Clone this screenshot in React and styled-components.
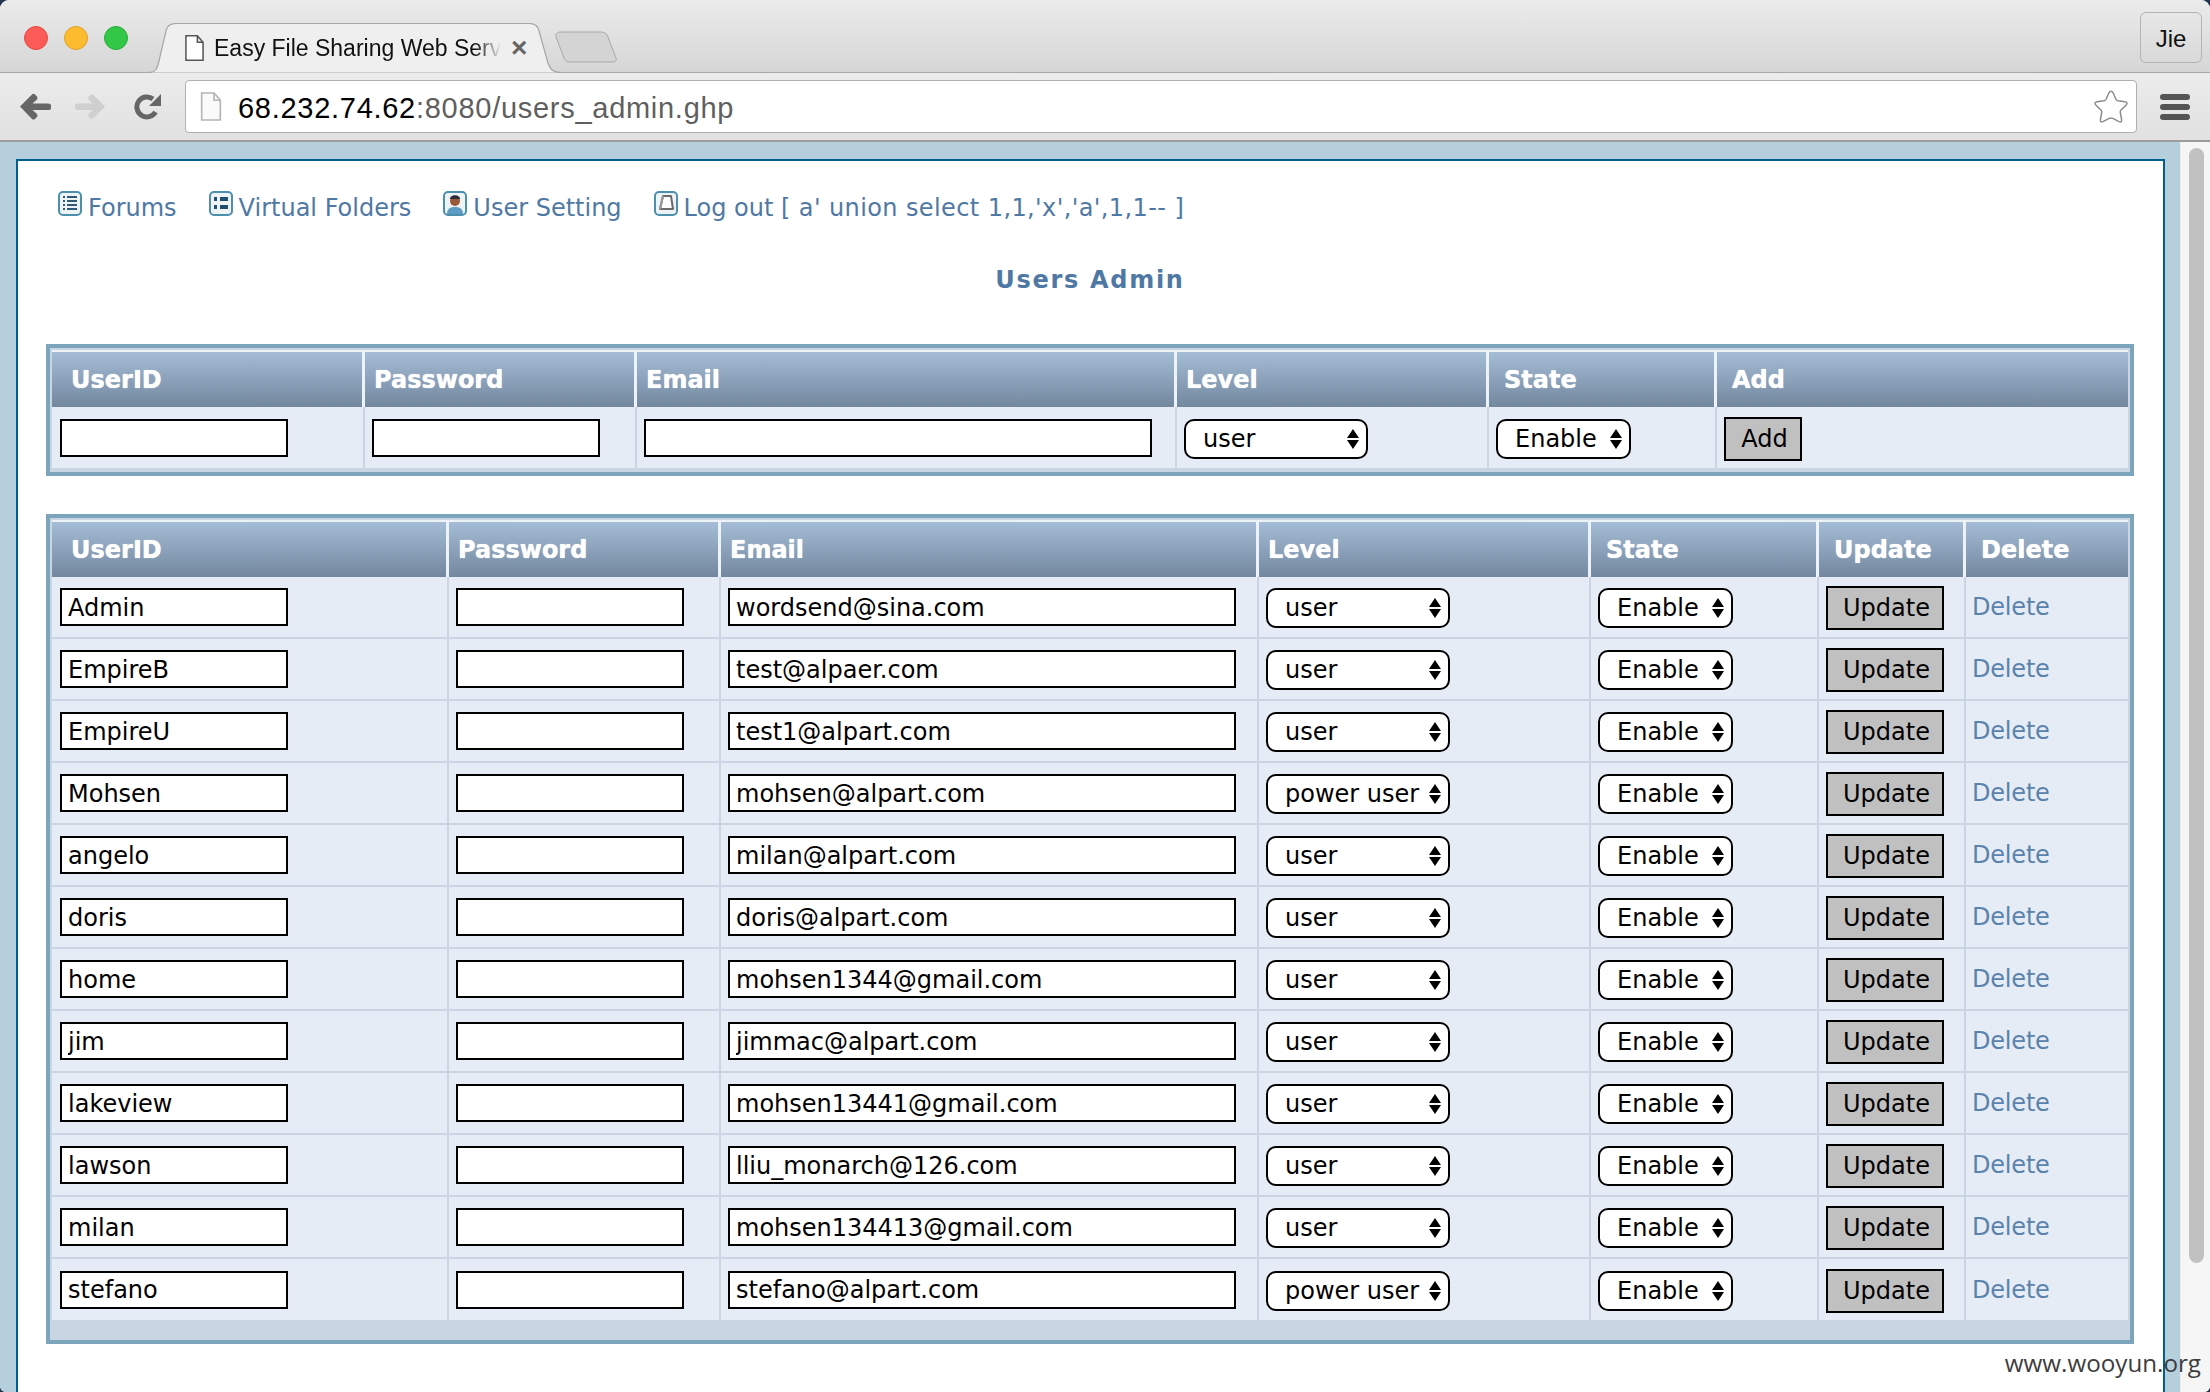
import React from 'react';
import styled, { createGlobalStyle } from 'styled-components';

const GlobalStyle = createGlobalStyle`
  * { box-sizing: border-box; }
  html, body { margin: 0; padding: 0; background: #24344f; }
  #root { width: 2210px; height: 1392px; }
`;

// --- BROWSER CHROME ---

const Win = styled.div`
  position: relative;
  display: flex;
  flex-direction: column;
  width: 2210px;
  height: 1392px;
  overflow: hidden;
  border-radius: 9px 9px 6px 6px;
  background: #fff;
`;

const TabStrip = styled.div`
  display: flex;
  align-items: flex-end;
  height: 73px;
  flex: none;
  border-bottom: 1px solid #a8a8a8;
  background: linear-gradient(#ebebeb, #d6d6d6);
`;

const Dots = styled.div`
  display: flex;
  gap: 16px;
  width: 148px;
  padding: 0 0 22px 24px;
  align-self: flex-end;
`;

const Dot = styled.span`
  width: 24px;
  height: 24px;
  border-radius: 50%;
  background: ${p => p.$fill};
  border: 1px solid ${p => p.$edge};
`;

const Tab = styled.div`
  position: relative;
  display: flex;
  align-items: center;
  width: 413px;
  height: 50px;
  margin-bottom: -1px;
  padding-left: 37px;
`;

const TabShape = styled.svg`
  position: absolute;
  left: 0;
  top: 0;
`;

const TabFile = styled.span`
  position: relative;
  display: flex;
  flex: none;
`;

const TabTitle = styled.span`
  position: relative;
  width: 290px;
  margin-left: 10px;
  white-space: nowrap;
  font: 23px 'Liberation Sans', sans-serif;
  color: #111;
  -webkit-mask-image: linear-gradient(to right, #000 90%, transparent 99%);
  mask-image: linear-gradient(to right, #000 90%, transparent 99%);
`;

const TabClose = styled.span`
  position: relative;
  margin-left: 7px;
  font: bold 28px 'Liberation Sans', sans-serif;
  color: #666;
`;

const NewTab = styled.svg`
  margin: 0 0 9px -6px;
  flex: none;
`;

const Profile = styled.div`
  display: flex;
  align-items: center;
  justify-content: center;
  width: 62px;
  height: 51px;
  margin: 0 8px 9px auto;
  padding-top: 2px;
  border: 1px solid #b4b4b4;
  border-radius: 6px;
  font: 24px 'Liberation Sans', sans-serif;
  color: #111;
`;

const Toolbar = styled.div`
  display: flex;
  align-items: center;
  height: 69px;
  flex: none;
  border-bottom: 2px solid #9c9c9c;
  background: linear-gradient(#ececec, #e1e1e1);
`;

const NavIcon = styled.svg`
  flex: none;
  margin-left: ${p => p.$left}px;
`;

const UrlBox = styled.div`
  display: flex;
  align-items: center;
  flex: 1;
  height: 53px;
  margin-left: 24px;
  padding: 0 7px 0 14px;
  background: #fff;
  border: 1px solid #b0b0b0;
  border-radius: 4px;
`;

const UrlText = styled.span`
  margin-left: 16px;
  padding-top: 3px;
  font: 29px 'Liberation Sans', sans-serif;
  letter-spacing: 0.72px;
  color: #5f5f5f;
  b { font-weight: normal; color: #000; }
`;

const Star = styled.svg`
  margin-left: auto;
`;

const Menu = styled.div`
  display: flex;
  flex-direction: column;
  gap: 4px;
  width: 30px;
  margin: 0 20px 0 23px;
  span { height: 6px; border-radius: 3px; background: #545454; }
`;

// --- PAGE ---

const Viewport = styled.div`
  display: flex;
  flex: 1;
  min-height: 0;
`;

const Page = styled.div`
  flex: 1;
  padding: 17px 15px 0 16px;
  background: #b6cfdc;
`;

const Scrollbar = styled.div`
  flex: none;
  width: 30px;
  padding: 6px 6px 0 8px;
  background: #f6f6f6;
  border-left: 1px solid #ececec;
`;

const Thumb = styled.div`
  height: 1115px;
  border-radius: 8px;
  background: #c1c1c1;
`;

const Content = styled.div`
  height: 100%;
  padding: 30px 29px 0 28px;
  background: #fff;
  border: solid #005f8f;
  border-width: 2px 2px 0;
`;

const NavRow = styled.nav`
  display: flex;
  align-items: flex-start;
  gap: 32px;
  padding-left: 12px;
  height: 30px;
`;

const NavLink = styled.a`
  display: flex;
  align-items: flex-start;
  gap: 6px;
  font: 24px/25px 'DejaVu Sans', Verdana, sans-serif;
  color: #4f79a4;
  white-space: nowrap;
`;

const NavLabel = styled.span`
  padding-top: 5px;
`;

const LoggedAs = styled.span`
  letter-spacing: 0.4px;
`;

const Heading = styled.h1`
  margin: 44px 0 49px;
  text-align: center;
  font: bold 24px/30px 'DejaVu Sans', Verdana, sans-serif;
  letter-spacing: 1.7px;
  color: #4f79a4;
`;

const Frame = styled.div`
  margin-bottom: 38px;
  padding: 2px 2px ${p => p.$tail}px;
  background: #c9d5e2;
  border: 4px solid #7ca5bc;
`;

const Grid = styled.table`
  width: 2076px;
  table-layout: fixed;
  border-collapse: separate;
  border-spacing: 0;
`;

const Head = styled.th`
  height: 57px;
  padding: 0 0 0 ${p => p.$pad || 9}px;
  text-align: left;
  font: bold 24px 'DejaVu Sans', Verdana, sans-serif;
  text-shadow: 0 0 1px #fff;
  color: #fff;
  background: linear-gradient(#a4bcd5, #73889f);
  border-top: 2px solid #edf2f7;
  border-right: 3px solid #edf2f7;
  &:last-child { border-right: 0; }
`;

const Cell = styled.td`
  height: 62px;
  padding: 0 0 0 ${p => (p.$first ? 8 : 7)}px;
  vertical-align: middle;
  background: #e6ecf5;
  border-right: 2px solid #c9d5e2;
  border-bottom: 2px solid #c9d5e2;
  &:last-child { border-right: 0; }
  tr:last-child > & { border-bottom: 0; height: 61px; }
`;

const TextInput = styled.input`
  display: block;
  width: ${p => p.$width}px;
  height: 38px;
  padding: 1px 0 0 6px;
  border: 2px solid #000;
  border-radius: 0;
  outline: 0;
  background: #fff;
  color: #000;
  font: 24px 'DejaVu Sans', Verdana, sans-serif;
`;

const SelectBox = styled.div`
  position: relative;
  width: ${p => p.$width}px;
  margin-top: 2px;
`;

const Select = styled.select`
  display: block;
  appearance: none;
  -webkit-appearance: none;
  width: 100%;
  height: 40px;
  padding: 0 0 0 17px;
  border: 2px solid #000;
  border-radius: 10px;
  outline: 0;
  background: #fff;
  color: #000;
  font: 24px 'DejaVu Sans', Verdana, sans-serif;
`;

const Arrows = styled.svg`
  position: absolute;
  right: 9px;
  top: 10px;
  pointer-events: none;
`;

const ActionButton = styled.button`
  display: block;
  width: ${p => p.$width}px;
  height: 44px;
  margin-top: 2px;
  padding: 0 0 0 3px;
  border: 2px solid #000;
  border-radius: 0;
  background: #c0c0c0;
  color: #000;
  font: 24px 'DejaVu Sans', Verdana, sans-serif;
`;

const DeleteLink = styled.a`
  margin-left: -1px;
  font: 24px 'DejaVu Sans', Verdana, sans-serif;
  letter-spacing: -0.2px;
  color: #5a83ac;
`;

const Watermark = styled.div`
  position: absolute;
  right: 9px;
  bottom: 13px;
  font: 24.2px 'Open Sans', sans-serif;
  color: #3d3d3d;
`;

// --- DATA ---

const USERS = [
  ['Admin', 'wordsend@sina.com', 'user'],
  ['EmpireB', 'test@alpaer.com', 'user'],
  ['EmpireU', 'test1@alpart.com', 'user'],
  ['Mohsen', 'mohsen@alpart.com', 'power user'],
  ['angelo', 'milan@alpart.com', 'user'],
  ['doris', 'doris@alpart.com', 'user'],
  ['home', 'mohsen1344@gmail.com', 'user'],
  ['jim', 'jimmac@alpart.com', 'user'],
  ['lakeview', 'mohsen13441@gmail.com', 'user'],
  ['lawson', 'lliu_monarch@126.com', 'user'],
  ['milan', 'mohsen134413@gmail.com', 'user'],
  ['stefano', 'stefano@alpart.com', 'power user'],
];

// --- SMALL DRAWINGS ---

const FileGlyph = ({ w, h, stroke, fill }) => (
  <svg width={w} height={h} viewBox="0 0 20 28">
    <path d="M1 1 H13 L19 8 V27 H1 Z M13 1 V8 H19" fill={fill} stroke={stroke} strokeWidth="1.6" />
  </svg>
);

const IconFrame = ({ children }) => (
  <svg width="24" height="25" viewBox="0 0 24 25">
    <rect x="1" y="1" width="22" height="23" rx="4" fill="#eef3f6" stroke="#4d90ad" strokeWidth="2" />
    {children}
  </svg>
);

const ForumsIcon = () => (
  <IconFrame>
    <path d="M5 6h2M9 6h10M5 10h2M9 10h10M5 14h2M9 14h10M5 18h2M9 18h10" stroke="#2e5a76" strokeWidth="2" />
  </IconFrame>
);

const FoldersIcon = () => (
  <IconFrame>
    <path d="M5 8h3M11 8h8M5 16h3M11 16h8" stroke="#1f4f6c" strokeWidth="4" />
  </IconFrame>
);

const UserIcon = () => (
  <IconFrame>
    <path d="M4 23 C4 17 8 16 12 16 C16 16 20 17 20 23 Z" fill="#5d9cc4" />
    <circle cx="12" cy="10" r="5" fill="#9a5a3a" />
    <path d="M7 8 C7 3 17 3 17 8 Z" fill="#2c2c38" />
  </IconFrame>
);

const LogoutIcon = () => (
  <IconFrame>
    <path d="M9 5 H17 L19 18 H6 Z" fill="#fff" stroke="#6b6b6b" strokeWidth="2" strokeLinejoin="round" />
    <path d="M9 5 L6 18" stroke="#9a9a9a" strokeWidth="2" />
  </IconFrame>
);

const Dropdown = ({ width, value, options }) => (
  <SelectBox $width={width}>
    <Select defaultValue={value}>
      {options.map(o => <option key={o}>{o}</option>)}
    </Select>
    <Arrows width="12" height="20" viewBox="0 0 12 20">
      <path d="M6 0 L12 9 H0 Z M6 20 L0 11 H12 Z" fill="#000" />
    </Arrows>
  </SelectBox>
);

const LEVELS = ['user', 'power user'];
const STATES = ['Enable', 'Disable'];

const Columns = ({ widths }) => (
  <colgroup>
    {widths.map((w, i) => <col key={i} width={w} />)}
  </colgroup>
);

export default function App() {
  return (
    <Win>
      <GlobalStyle />
      <TabStrip>
        <Dots>
          <Dot $fill="#fc5b57" $edge="#e5483f" />
          <Dot $fill="#fdbc2f" $edge="#e0a028" />
          <Dot $fill="#33c748" $edge="#2aab3b" />
        </Dots>
        <Tab>
          <TabShape width="413" height="50" viewBox="0 0 413 50">
            <path
              d="M0 49.5 C8 49.5 9 46 11 38 L18 8 C19 3 22 .5 28 .5 H381 C387 .5 390 3 391 8 L400 40 C402 46 405 49.5 413 49.5"
              fill="#efefef"
              stroke="#a6a6a6"
              strokeWidth="1.2"
            />
          </TabShape>
          <TabFile><FileGlyph w={19} h={28} stroke="#555" fill="#fff" /></TabFile>
          <TabTitle>Easy File Sharing Web Serv</TabTitle>
          <TabClose>×</TabClose>
        </Tab>
        <NewTab width="62" height="32" viewBox="0 0 62 32">
          <path
            d="M6 1 H46 C50 1 52 3 53 6 L61 27 C62 30 60 31 57 31 H15 C12 31 10 30 9 27 L1 6 C0 3 2 1 6 1 Z"
            fill="#d4d4d4"
            stroke="#a9a9a9"
          />
        </NewTab>
        <Profile>Jie</Profile>
      </TabStrip>

      <Toolbar>
        <NavIcon $left={19} width="32" height="27" viewBox="0 0 32 27">
          <path d="M1 13.5 L13 1.5 Q14.5 0 16 1.5 L18 3.5 Q19 5 18 6.5 L13.5 10.5 H29 Q32 10.5 32 12.5 V15 Q32 17 29 17 H13.5 L18 21 Q19 22.5 18 24 L16 26 Q14.5 27 13 26 Z" fill="#666" />
        </NavIcon>
        <NavIcon $left={24} width="31" height="27" viewBox="0 0 32 27">
          <path d="M31 13.5 L19 1.5 Q17.5 0 16 1.5 L14 3.5 Q13 5 14 6.5 L18.5 10.5 H3 Q0 10.5 0 12.5 V15 Q0 17 3 17 H18.5 L14 21 Q13 22.5 14 24 L16 26 Q17.5 27 19 26 Z" fill="#cfcfcf" />
        </NavIcon>
        <NavIcon $left={28} width="27" height="27" viewBox="0 0 27 27">
          <path d="M21.5 19 A10 10 0 1 1 19 6" fill="none" stroke="#666" strokeWidth="5" />
          <path d="M27 1 V13 H15 Z" fill="#666" />
        </NavIcon>
        <UrlBox>
          <FileGlyph w={22} h={29} stroke="#b5b5b5" fill="#fafafa" />
          <UrlText><b>68.232.74.62</b>:8080/users_admin.ghp</UrlText>
          <Star width="36" height="36" viewBox="0 0 36 36">
            <path
              d="M15.8 4 Q18 .5 20.2 4 L23 10.5 Q23.5 11.5 25 11.8 L32 12.8 Q35.5 13.5 33 16.2 L28 21 Q27 22 27.3 23.5 L28.6 30.5 Q29 34 26 32.6 L19.8 29.4 Q18 28.6 16.2 29.4 L10 32.6 Q7 34 7.4 30.5 L8.7 23.5 Q9 22 8 21 L3 16.2 Q.5 13.5 4 12.8 L11 11.8 Q12.5 11.5 13 10.5 Z"
              fill="#fff"
              stroke="#8c8c8c"
              strokeWidth="1.5"
            />
          </Star>
        </UrlBox>
        <Menu><span /><span /><span /></Menu>
      </Toolbar>

      <Viewport>
        <Page>
          <Content>
            <NavRow>
              <NavLink><ForumsIcon /><NavLabel>Forums</NavLabel></NavLink>
              <NavLink><FoldersIcon /><NavLabel>Virtual Folders</NavLabel></NavLink>
              <NavLink><UserIcon /><NavLabel>User Setting</NavLabel></NavLink>
              <NavLink>
                <LogoutIcon />
                <NavLabel>Log out <LoggedAs>[ a' union select 1,1,'x','a',1,1-- ]</LoggedAs></NavLabel>
              </NavLink>
            </NavRow>

            <Heading>Users Admin</Heading>

            <Frame $tail={4}>
              <Grid>
                <Columns widths={[313, 272, 540, 312, 228, 411]} />
                <thead>
                  <tr>
                    <Head $pad={19}>UserID</Head>
                    <Head>Password</Head>
                    <Head>Email</Head>
                    <Head>Level</Head>
                    <Head $pad={15}>State</Head>
                    <Head $pad={15}>Add</Head>
                  </tr>
                </thead>
                <tbody>
                  <tr>
                    <Cell $first><TextInput $width={228} /></Cell>
                    <Cell><TextInput $width={228} /></Cell>
                    <Cell><TextInput $width={508} /></Cell>
                    <Cell><Dropdown width={184} value="user" options={LEVELS} /></Cell>
                    <Cell><Dropdown width={135} value="Enable" options={STATES} /></Cell>
                    <Cell><ActionButton $width={78}>Add</ActionButton></Cell>
                  </tr>
                </tbody>
              </Grid>
            </Frame>

            <Frame $tail={20}>
              <Grid>
                <Columns widths={[397, 272, 538, 332, 228, 147, 162]} />
                <thead>
                  <tr>
                    <Head $pad={19}>UserID</Head>
                    <Head>Password</Head>
                    <Head>Email</Head>
                    <Head>Level</Head>
                    <Head $pad={15}>State</Head>
                    <Head $pad={15}>Update</Head>
                    <Head $pad={15}>Delete</Head>
                  </tr>
                </thead>
                <tbody>
                  {USERS.map(([name, email, level]) => (
                    <tr key={name}>
                      <Cell $first><TextInput $width={228} defaultValue={name} /></Cell>
                      <Cell><TextInput $width={228} /></Cell>
                      <Cell><TextInput $width={508} defaultValue={email} /></Cell>
                      <Cell><Dropdown width={184} value={level} options={LEVELS} /></Cell>
                      <Cell><Dropdown width={135} value="Enable" options={STATES} /></Cell>
                      <Cell><ActionButton $width={118}>Update</ActionButton></Cell>
                      <Cell><DeleteLink>Delete</DeleteLink></Cell>
                    </tr>
                  ))}
                </tbody>
              </Grid>
            </Frame>
          </Content>
        </Page>
        <Scrollbar><Thumb /></Scrollbar>
      </Viewport>

      <Watermark>www.wooyun.org</Watermark>
    </Win>
  );
}
